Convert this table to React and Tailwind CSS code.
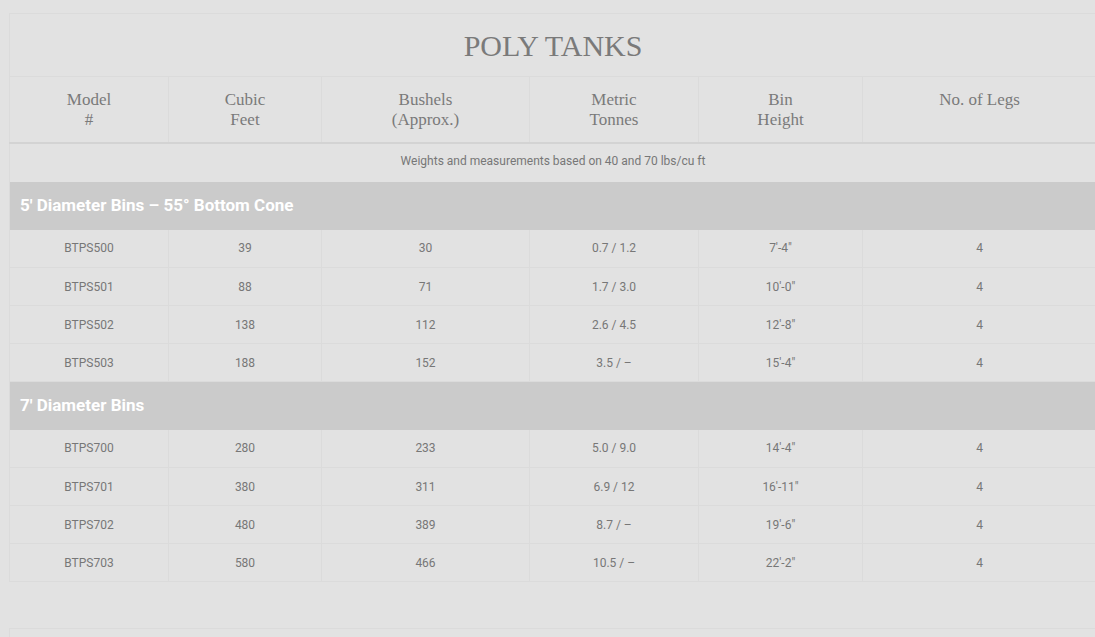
const cols = ["w-[159px]", "w-[153px]", "w-[208px]", "w-[169px]", "w-[164px]", "w-[234px]"];

const groups = [
  {
    title: "5′ Diameter Bins – 55° Bottom Cone",
    rows: [
      ["BTPS500", "39", "30", "0.7 / 1.2", "7'-4\"", "4"],
      ["BTPS501", "88", "71", "1.7 / 3.0", "10'-0\"", "4"],
      ["BTPS502", "138", "112", "2.6 / 4.5", "12'-8\"", "4"],
      ["BTPS503", "188", "152", "3.5 / –", "15'-4\"", "4"],
    ],
  },
  {
    title: "7′ Diameter Bins",
    rows: [
      ["BTPS700", "280", "233", "5.0 / 9.0", "14'-4\"", "4"],
      ["BTPS701", "380", "311", "6.9 / 12", "16'-11\"", "4"],
      ["BTPS702", "480", "389", "8.7 / –", "19'-6\"", "4"],
      ["BTPS703", "580", "466", "10.5 / –", "22'-2\"", "4"],
    ],
  },
];

const heads = [
  ["Model", "#"],
  ["Cubic", "Feet"],
  ["Bushels", "(Approx.)"],
  ["Metric", "Tonnes"],
  ["Bin", "Height"],
  ["No. of Legs"],
];

export default function App() {
  return (
    <div className="w-full h-[637px] overflow-hidden bg-[#e2e2e2] pt-[13px] pl-[9px]">
      <table className="w-[1087px] table-fixed border border-[#dbdbdb] text-[#777]">
        <colgroup>
          {cols.map((c, i) => (
            <col key={i} className={c} />
          ))}
        </colgroup>
        <tbody>
          <tr className="h-[63px]">
            <td
              colSpan={6}
              className="text-center align-middle text-[30px] leading-none text-[#7a7a7a] pt-[2px]"
              style={{ fontFamily: '"Liberation Serif", "Times New Roman", serif' }}
            >
              POLY TANKS
            </td>
          </tr>
          <tr className="h-[66px] border-t border-[#dbdbdb] border-b-2 border-b-[#d3d3d3]">
            {heads.map((h, i) => (
              <td
                key={i}
                className="align-top text-center pt-[13px] text-[17px] leading-[20px] text-[#7a7a7a] border-r border-[#dbdbdb]"
                style={{ fontFamily: '"Liberation Serif", "Times New Roman", serif' }}
              >
                {h.map((l, j) => (
                  <div key={j}>{l}</div>
                ))}
              </td>
            ))}
          </tr>
          <tr className="h-[39px]">
            <td colSpan={6} className="text-center align-middle pb-[3px] text-[12px] font-['Roboto',sans-serif] text-[#777]">
              Weights and measurements based on 40 and 70 lbs/cu ft
            </td>
          </tr>
          {groups.map((g) => (
            <GroupRows key={g.title} group={g} />
          ))}
        </tbody>
      </table>
      <div className="mt-[46px] border-t border-l border-[#dbdbdb] w-[1087px] h-[20px]"></div>
    </div>
  );
}

function GroupRows({ group }) {
  return (
    <>
      <tr className="h-[48px] bg-[#cbcbcb]">
        <td colSpan={6} className="pl-[10px] align-middle text-white font-bold text-[17px] font-['Roboto',sans-serif]">
          {group.title}
        </td>
      </tr>
      {group.rows.map((r) => (
        <tr key={r[0]} className="h-[38px] border-b border-[#dbdbdb]">
          {r.map((c, i) => (
            <td
              key={i}
              className="text-center align-middle text-[12px] font-['Roboto',sans-serif] text-[#777] border-r border-[#dbdbdb]"
            >
              {c}
            </td>
          ))}
        </tr>
      ))}
    </>
  );
}
